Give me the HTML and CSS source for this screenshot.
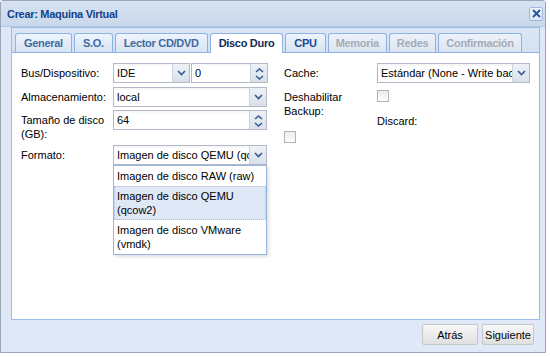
FILE: index.html
```html
<!DOCTYPE html>
<html lang="es">
<head>
<meta charset="utf-8">
<link rel="stylesheet" href="styles.css">
</head>
<body>
<div class="window">
  <div class="header">
    <span class="title">Crear: Maquina Virtual</span>
    <span class="close"><svg width="11" height="11" viewBox="0 0 11 11"><path d="M2 2 L9 9 M9 2 L2 9" stroke="#2a56a0" stroke-width="2" fill="none"/></svg></span>
  </div>
  <div class="body">
    <div class="tabpanel">
      <div class="strip">
        <div class="tab">General</div>
        <div class="tab">S.O.</div>
        <div class="tab">Lector CD/DVD</div>
        <div class="tab active">Disco Duro</div>
        <div class="tab cpu">CPU</div>
        <div class="tab disabled">Memoria</div>
        <div class="tab disabled">Redes</div>
        <div class="tab disabled">Confirmación</div>
      </div>
      <div class="panel-body">
        <div class="form">
          <div class="col col-left">
            <div class="row r1">
              <div class="lbl">Bus/Dispositivo:</div>
              <div class="ctl pair">
                <div class="field combo w-ide"><span class="val">IDE</span><span class="trigger"><svg width="9" height="6" viewBox="0 0 9 6"><path d="M1 1 L4.5 4.5 L8 1" stroke="#34588f" stroke-width="1.6" fill="none"/></svg></span></div>
                <div class="field spin w-num"><span class="val">0</span><span class="trigger spinner"><svg width="9" height="5" viewBox="0 0 9 5"><path d="M1 4 L4.5 1 L8 4" stroke="#34588f" stroke-width="1.5" fill="none"/></svg><svg width="9" height="5" viewBox="0 0 9 5"><path d="M1 1 L4.5 4 L8 1" stroke="#34588f" stroke-width="1.5" fill="none"/></svg></span></div>
              </div>
            </div>
            <div class="row r2">
              <div class="lbl">Almacenamiento:</div>
              <div class="ctl">
                <div class="field combo w-full"><span class="val">local</span><span class="trigger"><svg width="9" height="6" viewBox="0 0 9 6"><path d="M1 1 L4.5 4.5 L8 1" stroke="#34588f" stroke-width="1.6" fill="none"/></svg></span></div>
              </div>
            </div>
            <div class="row r3">
              <div class="lbl">Tamaño de disco (GB):</div>
              <div class="ctl">
                <div class="field spin w-full"><span class="val">64</span><span class="trigger spinner"><svg width="9" height="5" viewBox="0 0 9 5"><path d="M1 4 L4.5 1 L8 4" stroke="#34588f" stroke-width="1.5" fill="none"/></svg><svg width="9" height="5" viewBox="0 0 9 5"><path d="M1 1 L4.5 4 L8 1" stroke="#34588f" stroke-width="1.5" fill="none"/></svg></span></div>
              </div>
            </div>
            <div class="row r4">
              <div class="lbl">Formato:</div>
              <div class="ctl dropctl">
                <div class="field combo w-full focus"><span class="val">Imagen de disco QEMU (qcow2)</span><span class="trigger"><svg width="9" height="6" viewBox="0 0 9 6"><path d="M1 1 L4.5 4.5 L8 1" stroke="#34588f" stroke-width="1.6" fill="none"/></svg></span></div>
                <ul class="list">
                  <li class="item">Imagen de disco RAW (raw)</li>
                  <li class="item selected">Imagen de disco QEMU (qcow2)</li>
                  <li class="item">Imagen de disco VMware (vmdk)</li>
                </ul>
              </div>
            </div>
          </div>
          <div class="col col-right">
            <div class="row rc1">
              <div class="lbl lbl-r">Cache:</div>
              <div class="ctl">
                <div class="field combo w-cache"><span class="val">Estándar (None - Write back)</span><span class="trigger"><svg width="9" height="6" viewBox="0 0 9 6"><path d="M1 1 L4.5 4.5 L8 1" stroke="#34588f" stroke-width="1.6" fill="none"/></svg></span></div>
              </div>
            </div>
            <div class="row rc2">
              <div class="lbl lbl-r nopad">Deshabilitar Backup:</div>
              <div class="ctl stack">
                <span class="check"></span>
                <div class="discard">Discard:</div>
              </div>
            </div>
            <div class="row rc3">
              <span class="check"></span>
            </div>
          </div>
        </div>
      </div>
    </div>
    <div class="footer">
      <button class="btn b-back">Atrás</button>
      <button class="btn b-next">Siguiente</button>
    </div>
  </div>
</div>
</body>
</html>
```

FILE: styles.css
```css
* { box-sizing: border-box; }
html, body { margin: 0; padding: 0; background: #ffffff; }
body {
  font-family: "Liberation Sans", Arial, sans-serif;
  font-size: 11px;
  letter-spacing: 0;
  color: #000;
}
.window {
  width: 546px;
  height: 353px;
  border: 1px solid #9aa6b6;
  border-radius: 3px 3px 0 0;
  background: #dfe8f6;
  display: flex;
  flex-direction: column;
}
.header {
  height: 26px;
  flex: none;
  display: flex;
  align-items: center;
  justify-content: space-between;
  padding: 1px 2px 0 6px;
  background: linear-gradient(#d7e3f2, #c9d8eb);
  border-bottom: 1px solid #b3c6de;
}
.title {
  font-weight: bold;
  color: #15428b;
  letter-spacing: -0.3px;
}
.close {
  width: 14px;
  height: 14px;
  border: 1px solid #9fb7da;
  border-radius: 2px;
  background: linear-gradient(#f2f6fc, #dbe6f4);
  display: flex;
  align-items: center;
  justify-content: center;
  margin-top: -1px;
}
.body {
  flex: 1;
  display: flex;
  flex-direction: column;
  padding: 0 5px 0 10px;
}
.tabpanel {
  height: 293px;
  flex: none;
  border: 1px solid #99bbe8;
  display: flex;
  flex-direction: column;
  background: #fff;
}
.strip {
  height: 25px;
  flex: none;
  display: flex;
  align-items: flex-end;
  gap: 2px;
  padding: 5px 0 0 3px;
  background: linear-gradient(#dae6f5, #d3e1f2);
  border-bottom: 1px solid #8db2e3;
}
.tab {
  height: 19px;
  line-height: 18px;
  padding: 0 8px;
  border: 1px solid #8db2e3;
  border-bottom: none;
  border-radius: 3px 3px 0 0;
  background: linear-gradient(#eef4fc, #d7e4f4);
  font-weight: bold;
  color: #416aa3;
  letter-spacing: -0.3px;
}
.tab.active {
  height: 20px;
  margin-bottom: -1px;
  background: #fff;
  color: #102b5c;
}
.tab.cpu { color: #1d4a92; }
.tab.disabled { color: #a6abb6; background: linear-gradient(#edf2f9, #dbe5f2); padding: 0 7px; }
.panel-body {
  flex: 1;
  background: #fff;
}
.form {
  display: flex;
  gap: 17px;
  padding: 10px 0 0 9px;
}
.col-left { width: 246px; }
.col-right { width: 246px; }
.row { display: flex; }
.r1 { margin-bottom: 4px; }
.r2 { margin-bottom: 3px; }
.r3 { margin-bottom: 4px; }
.lbl {
  width: 92px;
  flex: none;
  padding-top: 3px;
  line-height: 14px;
}
.lbl-r { width: 93px; }
.nopad { padding-top: 0; }
.ctl { display: flex; }
.pair { gap: 1px; }
.field {
  height: 20px;
  border: 1px solid #b5b8c8;
  background: linear-gradient(#f4f4f4 0, #ffffff 3px);
  display: flex;
  align-items: stretch;
}
.val {
  flex: 1;
  min-width: 0;
  overflow: hidden;
  white-space: nowrap;
  padding-left: 3px;
  line-height: 18px;
}
.trigger {
  width: 17px;
  flex: none;
  border-left: 1px solid #ccd3de;
  background: linear-gradient(#eef2f7, #d9e0ea);
  display: flex;
  align-items: center;
  justify-content: center;
}
.spinner {
  flex-direction: column;
  justify-content: center;
  gap: 2px;
  padding-top: 1px;
}
.spinner svg { display: block; }
.w-ide { width: 77px; }
.w-num { width: 77px; }
.w-full { width: 154px; }
.w-cache { width: 153px; }
.dropctl { position: relative; }
.list {
  position: absolute;
  top: 100%;
  left: 0;
  width: 154px;
  margin: 0;
  padding: 0;
  list-style: none;
  background: #fff;
  border: 1px solid #98b6dc;
  box-shadow: 2px 2px 3px rgba(0, 0, 0, 0.12);
}
.item {
  padding: 2px;
  line-height: 14px;
  border: 1px solid #fff;
}
.item.selected {
  background: #dfe8f6;
  border: 1px dotted #a3bae9;
}
.rc1 { margin-bottom: 7px; }
.stack { flex-direction: column; }
.check {
  display: block;
  width: 12px;
  height: 12px;
  border: 1px solid #b0b4ba;
  background: linear-gradient(#ececec, #fdfdfd);
}
.discard {
  margin-top: 12px;
  line-height: 14px;
}
.rc3 { margin-top: 3px; }
.footer {
  flex: 1;
  display: flex;
  justify-content: flex-end;
  gap: 4px;
  padding: 4px 6px 0 0;
}
.btn {
  height: 21px;
  font-family: "Liberation Sans", Arial, sans-serif;
  font-size: 11px;
  color: #000;
  padding: 0;
  border: 1px solid #c6c6c6;
  border-radius: 2px;
  background: linear-gradient(#f8f8f8, #ececec 50%, #dfdfdf);
}
.b-back { width: 56px; }
.b-next { width: 52px; }
```
